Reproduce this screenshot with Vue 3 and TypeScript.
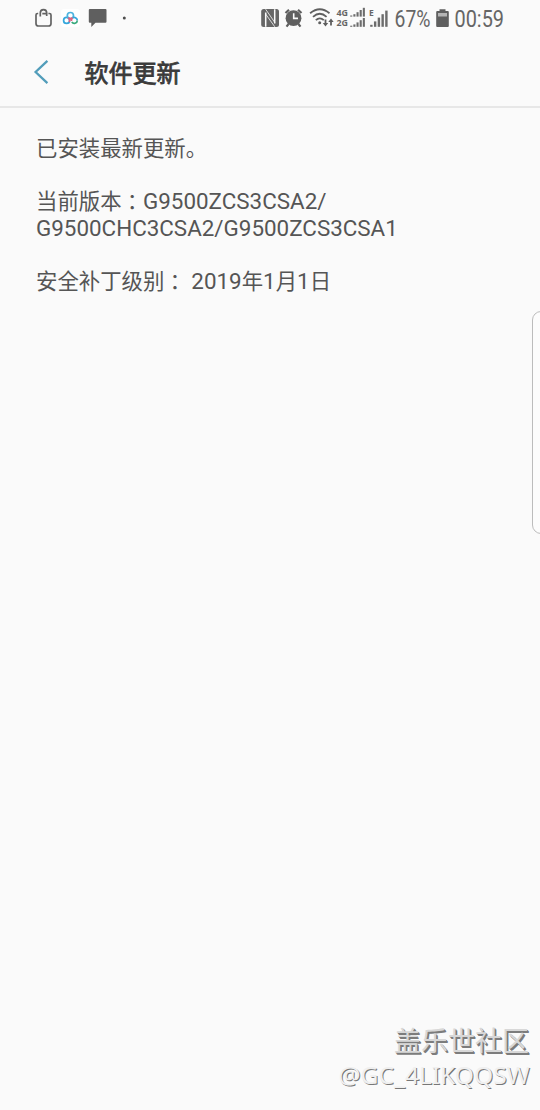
<script setup lang="ts">
interface Bars { x: number; y: number; w: number; h: number }
const makeBars = (x: number, base: number, step: number, w: number, heights: number[]): Bars[] =>
  heights.map((h, i) => ({ x: x + i * step, y: base - h, w, h }))
const signal: Bars[] = [
  ...makeBars(16.2, 16.6, 3.15, 2.1, [1.1, 2.4, 4.4, 6.6, 8.8]),
  ...makeBars(16.2, 26.8, 3.15, 2.1, [1.1, 2.4, 4.4, 6.6, 8.8]),
  ...makeBars(36.2, 26.8, 3.75, 2.4, [2, 5.4, 9.2, 12.6, 16.2]),
]
const version = ['G9500ZCS3CSA2/', 'G9500CHC3CSA2/G9500ZCS3CSA1']
</script>

<template>
  <main class="screen">
    <div class="status">
      <svg class="left" width="110" height="36" viewBox="25 0 110 36">
        <path d="M38.2 13.5H37.5Q36 13.5 36 15V23.5Q36 26 38.5 26H48.5Q51 26 51 23.5V15Q51 13.5 49.5 13.5H48.4M40.3 16.5V13Q40.3 9.6 43.5 9.6Q46.7 9.6 46.7 13V16M46 13.6H42.3" fill="none" stroke="#636363" stroke-width="1.7" />
        <rect x="61" y="9" width="19" height="18" rx="3" fill="#fff" />
        <g fill="none" stroke-width="1.7">
          <circle cx="66.6" cy="20.4" r="3" stroke="#35a7dc" />
          <circle cx="70.4" cy="15.6" r="3.1" stroke="#4bb3df" />
          <path d="M68.2 17.7A3.1 3.1 0 0 0 72.6 17.7M69 18.5A3 3 0 0 1 69.2 22M72 18.5A3 3 0 0 0 71.6 21" stroke="#e2607d" />
          <path d="M73 17.8A3 3 0 0 1 77.3 20.4" stroke="#35a7dc" />
          <path d="M77.3 20.4A3 3 0 0 1 71.8 22" stroke="#36a97b" />
        </g>
        <path d="M89.8 9H105.5Q106.5 9 106.5 10V21.8Q106.5 22.8 105.5 22.8H95.5L91.3 27V22.8H89.8Q88.8 22.8 88.8 21.8V10Q88.8 9 89.8 9Z" fill="#5f5f5f" />
        <circle cx="124.3" cy="18" r="1.5" fill="#4c4c4c" />
      </svg>
      <svg class="right" width="76" height="36" viewBox="258 0 76 36">
        <rect x="261.2" y="9" width="17.8" height="18" rx="2.5" fill="#666" />
        <path d="M265.7 26.8V12.5M274.7 9.2V23.5" fill="none" stroke="#fafafa" stroke-width="1.5" />
        <path d="M265.6 9.2L274.8 22.5M265.6 14L274.8 26.8" fill="none" stroke="#fafafa" stroke-width=".8" />
        <circle cx="293.5" cy="18.2" r="7.9" fill="#5f5f5f" />
        <path d="M285.5 13L289 9.7M301.5 13L298 9.7M288.6 24L286.5 26.6M298.4 24L300.5 26.6" stroke="#5f5f5f" stroke-width="2.2" />
        <path d="M293.7 13.2V18.4H298" fill="none" stroke="#fafafa" stroke-width="1.6" />
        <g fill="none" stroke="#5f5f5f" stroke-width="1.8">
          <path d="M310.1 13.2Q319.8 5.2 329.5 13.2M313 16.8Q319.8 10.8 326.6 16.8M315.8 20.2Q319.8 16.5 323.8 20.2" />
          <path d="M325.5 19.5V24M331 25.5V21" />
        </g>
        <circle cx="319.7" cy="22.7" r="1.5" fill="#5f5f5f" />
        <path d="M322.8 23H328.2L325.5 26.6ZM328.3 22H333.7L331 18.5Z" fill="#5f5f5f" />
      </svg>
      <svg class="signal" width="60" height="36" viewBox="0 0 60 36">
        <g class="net">
          <text x="2.5" y="16" textLength="11.5" lengthAdjust="spacingAndGlyphs">4G</text>
          <text x="2.5" y="26.2" textLength="11.5" lengthAdjust="spacingAndGlyphs">2G</text>
          <text x="35" y="16.4">E</text>
        </g>
        <rect v-for="(b, i) in signal" :key="i" :x="b.x" :y="b.y" :width="b.w" :height="b.h" fill="#6c6c6c" />
      </svg>
      <svg class="tail" width="146" height="36" viewBox="394 0 146 36">
        <text x="394.5" y="26.8" textLength="36" lengthAdjust="spacingAndGlyphs">67%</text>
        <path d="M436.2 12Q436.2 11 437.2 11H439.5V9.2H445.5V11H447.8Q448.8 11 448.8 12V26Q448.8 27 447.8 27H437.2Q436.2 27 436.2 26Z" fill="#5f5f5f" />
        <rect x="438" y="13" width="9" height="3.5" fill="#b5b5b5" />
        <text x="454.5" y="26.8" textLength="49.5" lengthAdjust="spacingAndGlyphs">00:59</text>
      </svg>
    </div>
    <header class="bar">
      <svg width="20" height="28" viewBox="0 0 20 28"><path d="M15.4 3.8L3.6 15L15.4 26.2" fill="none" stroke="#529dba" stroke-width="2.3" /></svg>
      <h1>软件更新</h1>
    </header>
    <section class="info">
      <p>已安装最新更新。</p>
      <p>当前版本<span class="colon">：</span><span class="latin">{{ version[0] }}</span><br /><span class="latin">{{ version[1] }}</span></p>
      <p>安全补丁级别<span class="colon">：</span><span class="latin"> 2019</span>年<span class="latin">1</span>月<span class="latin">1</span>日</p>
    </section>
    <div class="edge"></div>
    <footer class="mark">
      <svg width="210" height="80" viewBox="330 1020 210 80">
        <text class="zh" x="394" y="1051" textLength="135" lengthAdjust="spacingAndGlyphs">盖乐世社区</text>
        <text class="id" x="338.5" y="1084" textLength="191" lengthAdjust="spacingAndGlyphs">@GC_4LIKQQSW</text>
      </svg>
    </footer>
  </main>
</template>

<style>
body { margin: 0; background: #fafafa; }
</style>

<style scoped>
.screen {
  position: relative;
  display: flex;
  flex-direction: column;
  box-sizing: border-box;
  width: 540px;
  height: 1110px;
  overflow: hidden;
  background: #fafafa;
  color: #555;
  font-family: "Noto Sans CJK SC", sans-serif;
}
svg { display: block; flex: none; }
.status { display: flex; height: 36px; padding-left: 25px; }
.right { margin-left: 123px; }
.net text { font: bold 8.5px "Open Sans", sans-serif; fill: #666; }
.tail text { font: 23px Roboto, sans-serif; fill: #666; }
.bar {
  display: flex;
  align-items: center;
  height: 70px;
  padding-left: 32px;
  border-bottom: 2px solid #e7e7e7;
}
.bar h1 {
  margin: 2px 0 0 32.5px;
  color: #3a3a3a;
  font: 400 24px/36px "Noto Sans CJK SC", sans-serif;
  -webkit-text-stroke: .8px #3a3a3a;
}
.info { padding: 26px 36px 0; }
.info p {
  margin: 0 0 26.5px;
  font-size: 21.4px;
  line-height: 26.5px;
  white-space: nowrap;
}
.colon { position: relative; top: 1px; font-family: "Noto Sans CJK TC", sans-serif; line-height: 0; }
.latin { font-family: Roboto, sans-serif; font-size: 22.4px; line-height: 0; }
.edge {
  position: absolute;
  top: 311px;
  right: -12px;
  box-sizing: border-box;
  width: 20px;
  height: 223px;
  border: 1px solid #bcbcbc;
  border-radius: 9px;
  background: #fcfcfc;
}
.mark { display: flex; justify-content: flex-end; margin-top: auto; padding-bottom: 10px; }
.mark .zh { font: 400 27px "Noto Sans CJK SC", sans-serif; fill: #d8d8d8; text-shadow: 1px 1px 0 #7c7c7c, 1.7px 1.7px 0 #7c7c7c; }
.mark .id { font: 24px "Noto Sans", sans-serif; fill: #f0f0f0; text-shadow: 1px 1px 0 #777; }
</style>
